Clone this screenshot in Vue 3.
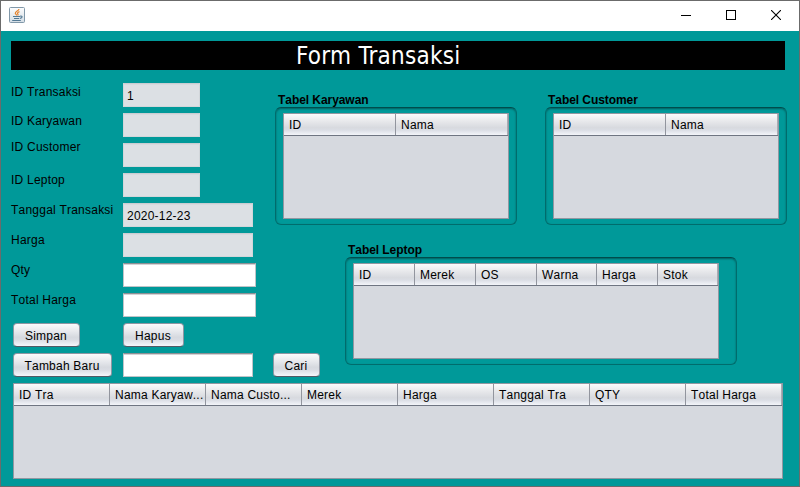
<script setup>
const fields = [
  { label: 'ID Transaksi', value: '1', size: 'short', shift: 'down2', locked: true },
  { label: 'ID Karyawan', value: '', size: 'short', shift: 'down1', locked: true },
  { label: 'ID Customer', value: '', size: 'short', shift: 'up3', locked: true },
  { label: 'ID Leptop', value: '', size: 'short', shift: '', locked: true },
  { label: 'Tanggal Transaksi', value: '2020-12-23', size: 'medium', shift: '', locked: true },
  { label: 'Harga', value: '', size: 'medium', shift: '', locked: true },
  { label: 'Qty', value: '', size: 'long', shift: '', locked: false },
  { label: 'Total Harga', value: '', size: 'long', shift: '', locked: false },
]
const people = [
  { title: 'Tabel Karyawan', columns: ['ID', 'Nama'] },
  { title: 'Tabel Customer', columns: ['ID', 'Nama'] },
]
const laptopColumns = ['ID', 'Merek', 'OS', 'Warna', 'Harga', 'Stok']
const salesColumns = ['ID Tra', 'Nama Karyaw...', 'Nama Custo...', 'Merek', 'Harga', 'Tanggal Tra', 'QTY', 'Total Harga']
</script>

<template>
  <div class="window">
    <header class="titlebar">
      <svg class="app-icon" width="16" height="16" viewBox="0 0 16 16">
        <defs>
          <linearGradient id="tile" x1="0" y1="0" x2="0" y2="1">
            <stop offset="0" stop-color="#fdfdfd" />
            <stop offset="1" stop-color="#d3dde5" />
          </linearGradient>
        </defs>
        <rect x="0.5" y="0.5" width="15" height="15" rx="1" fill="url(#tile)" stroke="#8198a9" />
        <path d="M10 2C10 4 6 4.200 6.300 6.300C6.500 7.300 7.600 7.500 7.900 8.500M10.500 4.600C8.500 5.300 8 6.200 8.900 7.100C9.300 7.600 9 8 8.700 8.400" fill="none" stroke="#e5842e" stroke-width="1.200" />
        <path d="M4 9.500H11M5 11.500H10.200M3.200 13.500H11.800M11 9.200C14 8.500 13.600 11 10.900 11.400" fill="none" stroke="#537994" stroke-width="1.100" />
      </svg>
      <div class="controls">
        <svg width="10" height="10" viewBox="0 0 10 10"><path d="M0 5.500H10" stroke="#000" /></svg>
        <svg width="10" height="10" viewBox="0 0 10 10"><rect x="0.500" y="0.500" width="9" height="9" fill="none" stroke="#000" /></svg>
        <svg width="10" height="10" viewBox="0 0 10 10"><path d="M0 0L10 10M10 0L0 10" stroke="#000" stroke-width="1.100" /></svg>
      </div>
    </header>

    <main class="content">
      <h1 class="heading">Form Transaksi</h1>

      <div class="body">
        <form class="form" @submit.prevent>
          <div v-for="f in fields" :key="f.label" class="row">
            <label class="label" :class="f.shift">{{ f.label }}</label>
            <div class="field" :class="[f.size, { locked: f.locked }]">{{ f.value }}</div>
          </div>
          <div class="row">
            <div class="action"><button class="btn simpan">Simpan</button></div>
            <button class="btn hapus">Hapus</button>
          </div>
          <div class="row">
            <div class="action"><button class="btn tambah">Tambah Baru</button></div>
            <div class="field medium"></div>
            <button class="btn cari">Cari</button>
          </div>
        </form>

        <div class="tables">
          <div class="people">
            <section v-for="p in people" :key="p.title" class="group">
              <h2 class="group-title">{{ p.title }}</h2>
              <div class="panel">
                <div class="table">
                  <div class="thead">
                    <span v-for="c in p.columns" :key="c" class="th half">{{ c }}</span>
                  </div>
                </div>
              </div>
            </section>
          </div>
          <section class="group laptop">
            <h2 class="group-title">Tabel Leptop</h2>
            <div class="panel wide">
              <div class="table">
                <div class="thead">
                  <span v-for="c in laptopColumns" :key="c" class="th sixth">{{ c }}</span>
                </div>
              </div>
            </div>
          </section>
        </div>
      </div>

      <div class="table sales">
        <div class="thead">
          <span v-for="c in salesColumns" :key="c" class="th eighth">{{ c }}</span>
        </div>
      </div>
    </main>
  </div>
</template>

<style>
body {
  margin: 0;
  overflow: hidden;
}
</style>

<style scoped>
* {
  box-sizing: border-box;
}
.window {
  width: 800px;
  height: 487px;
  border: 1px solid #6b6b6b;
  background: #009999;
  font: 12px/14px 'Liberation Sans', Arial, sans-serif;
  font-kerning: none;
  letter-spacing: 0.22px;
  color: #000;
  display: flex;
  flex-direction: column;
}
.titlebar {
  height: 30px;
  flex: none;
  background: #fff;
  display: flex;
  justify-content: space-between;
  align-items: flex-start;
  padding: 6px 18px 0 8px;
}
.app-icon {
  display: block;
}
.controls {
  display: flex;
  gap: 35px;
  padding-top: 3px;
}
.controls svg {
  display: block;
}
.content {
  padding: 10px 14px 0 10px;
}
.heading {
  margin: 0;
  height: 29px;
  background: #000;
  color: #fff;
  font: 24px/30px 'DejaVu Sans Condensed', 'DejaVu Sans', sans-serif;
  font-stretch: condensed;
  letter-spacing: 0.27px;
  padding-left: 285px;
  white-space: nowrap;
}
.body {
  display: flex;
  height: 313px;
  padding-top: 13px;
}
.form {
  width: 264px;
  flex: none;
  display: flex;
  flex-direction: column;
  gap: 6px;
}
.row {
  display: flex;
  height: 24px;
  flex: none;
}
.label {
  width: 112px;
  flex: none;
  white-space: nowrap;
}
.down2 {
  margin-top: 2px;
}
.down1 {
  margin-top: 1px;
}
.up3 {
  margin-top: -3px;
}
.field {
  height: 24px;
  flex: none;
  padding: 5px 3px 0;
  border: 1px solid #c0c4c8;
  border-top-color: #8d8f94;
  background: #fff;
  box-shadow: inset 0 1px 0 #d2d3d5;
  line-height: 14px;
  white-space: nowrap;
}
.field.locked {
  background: #dce0e4;
  border-color: #d2d6da;
  border-top-color: #c9cdd2;
  box-shadow: inset 0 1px 0 #d6dade;
}
.short {
  width: 77px;
}
.medium {
  width: 130px;
}
.long {
  width: 133px;
}
.action {
  width: 110px;
  margin-left: 2px;
  flex: none;
}
.btn {
  display: block;
  height: 24px;
  flex: none;
  padding: 1px 1px 0 0;
  border: 1px solid #8f96a3;
  border-bottom-color: #525965;
  border-radius: 4px;
  background: linear-gradient(#fbfbfc 0%, #e6e8ec 35%, #d6d9df 60%, #d9dce3 72%, #f4f6fb 100%);
  font: inherit;
  letter-spacing: inherit;
  color: #000;
  text-align: center;
  white-space: nowrap;
}
.simpan {
  width: 67px;
}
.hapus {
  width: 61px;
}
.tambah {
  width: 99px;
}
.cari {
  width: 47px;
  margin-left: 20px;
}
.tables {
  flex: none;
  padding-top: 10px;
}
.people {
  display: flex;
  gap: 28px;
}
.group-title {
  margin: 0;
  height: 14px;
  padding-left: 3px;
  font-size: 12px;
  line-height: 14px;
  font-weight: bold;
  letter-spacing: -0.06px;
}
.panel {
  width: 242px;
  height: 118px;
  padding: 5px 7px;
  border-radius: 6px;
  border: 1px solid #006c6c;
  border-top-color: #004c4c;
  box-shadow: inset 0 1px 2px #005f5f;
}
.laptop {
  padding: 18px 0 0 70px;
}
.panel.wide {
  width: 392px;
  height: 108px;
  padding-right: 17px;
}
.table {
  height: 100%;
  border: 1px solid #9297a1;
  background: #d6d9df;
}
.thead {
  height: 22px;
  display: flex;
  background: linear-gradient(#fbfbfc 0%, #e7e8eb 35%, #d8dadf 65%, #dadde4 76%, #f3f5fa 100%);
  border-bottom: 1px solid #6f7582;
}
.th {
  flex: none;
  padding: 4px 0 0 5px;
  border-right: 1px solid #92959e;
  white-space: nowrap;
}
.half {
  width: 112px;
}
.sixth {
  width: 61px;
}
.sixth:nth-child(4) {
  width: 60px;
}
.eighth {
  width: 96px;
}
.th:last-child {
  flex: 1;
}
.sales {
  height: 96px;
  width: 770px;
  margin-left: 2px;
}
.thead .th:last-child {
  border-right-color: #a9acb3;
}
</style>
